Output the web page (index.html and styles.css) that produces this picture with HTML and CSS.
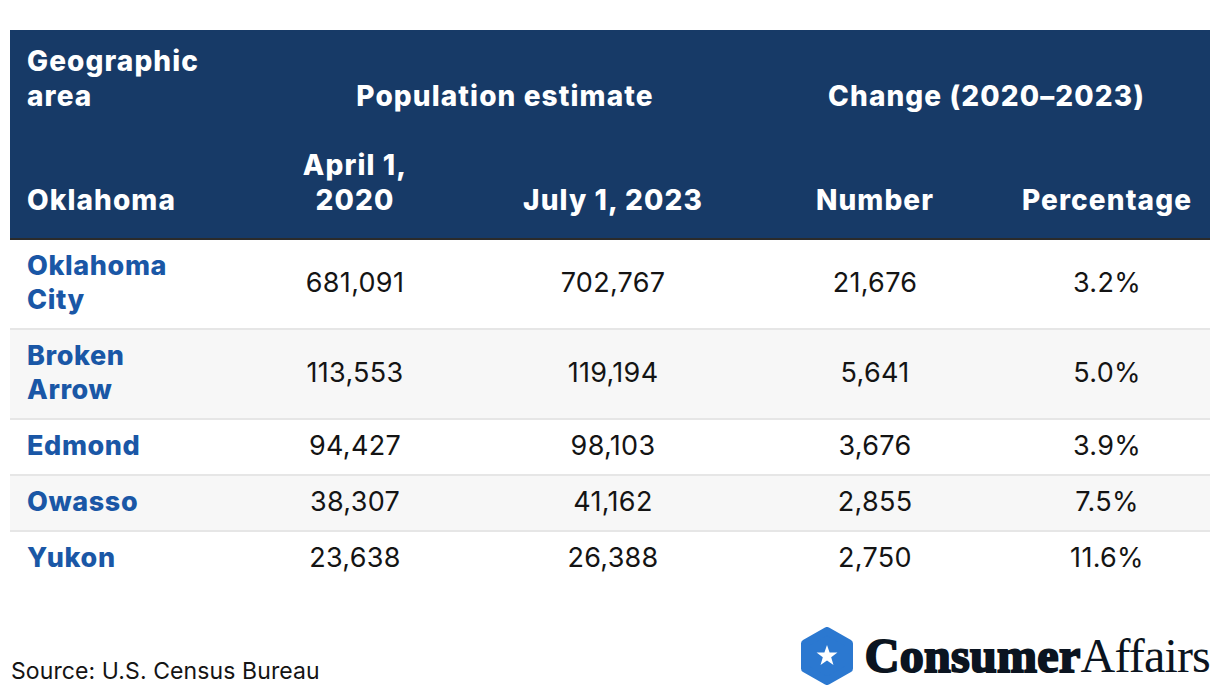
FILE: index.html
```html
<!DOCTYPE html>
<html lang="en">
<head>
<meta charset="utf-8">
<title>Oklahoma population estimates</title>
<link rel="stylesheet" href="styles.css">
</head>
<body>
<div class="page">
  <table class="pop">
    <colgroup>
      <col class="c1"><col class="c2"><col class="c3"><col class="c4"><col class="c5">
    </colgroup>
    <thead>
      <tr class="h1">
        <th class="left">Geographic<br>area</th>
        <th colspan="2">Population estimate</th>
        <th colspan="2">Change (2020–2023)</th>
      </tr>
      <tr class="h2">
        <th class="left">Oklahoma</th>
        <th>April 1,<br>2020</th>
        <th>July 1, 2023</th>
        <th>Number</th>
        <th class="pct">Percentage</th>
      </tr>
    </thead>
    <tbody>
      <tr>
        <td class="city">Oklahoma<br>City</td><td>681,091</td><td>702,767</td><td>21,676</td><td class="pct">3.2%</td>
      </tr>
      <tr class="alt">
        <td class="city">Broken<br>Arrow</td><td>113,553</td><td>119,194</td><td>5,641</td><td class="pct">5.0%</td>
      </tr>
      <tr>
        <td class="city">Edmond</td><td>94,427</td><td>98,103</td><td>3,676</td><td class="pct">3.9%</td>
      </tr>
      <tr class="alt">
        <td class="city">Owasso</td><td>38,307</td><td>41,162</td><td>2,855</td><td class="pct">7.5%</td>
      </tr>
      <tr class="last">
        <td class="city">Yukon</td><td>23,638</td><td>26,388</td><td>2,750</td><td class="pct">11.6%</td>
      </tr>
    </tbody>
  </table>
  <div class="footer">
    <div class="source">Source: U.S. Census Bureau</div>
    <div class="logo">
      <svg class="hex" width="52" height="58" viewBox="0 0 52 58" aria-hidden="true">
        <polygon points="26,4 48,16.5 48,41.5 26,54 4,41.5 4,16.5" fill="#2b78d0" stroke="#2b78d0" stroke-width="8" stroke-linejoin="round"/>
        <polygon points="26,18 28.59,25.44 36.46,25.6 30.18,30.36 32.47,37.9 26,33.4 19.53,37.9 21.82,30.36 15.54,25.6 23.41,25.44" fill="#ffffff"/>
      </svg>
      <div class="brand"><span class="b1">Consumer</span><span class="b2">Affairs</span></div>
    </div>
  </div>
</div>
</body>
</html>
```
FILE: styles.css
```css
html, body {
  margin: 0;
  padding: 0;
  background: #ffffff;
}
body {
  font-family: Inter, "Noto Sans", "Liberation Sans", sans-serif;
  color: #141414;
}
.page {
  width: 1200px;
  padding: 30px 10px 0;
}
.pop {
  width: 1200px;
  border-collapse: collapse;
  table-layout: fixed;
}
.c1 { width: 237px; }
.c2 { width: 216px; }
.c3 { width: 300px; }
.c4 { width: 224px; }
.c5 { width: 223px; }

.pop thead {
  background: #173a67;
  color: #ffffff;
}
.pop th {
  font-weight: 800;
  font-size: 28px;
  line-height: 35px;
  text-align: center;
  vertical-align: bottom;
  padding: 0 10px;
  letter-spacing: 1.1px;
  white-space: nowrap;
}
.pop th.left {
  text-align: left;
  padding-left: 17px;
}
.h1 th {
  padding-top: 14px;
  padding-bottom: 14px;
}
.h2 th {
  padding-top: 20px;
  padding-bottom: 20px;
  border-bottom: 2px solid #2b2b2b;
}
.pop td {
  font-size: 27px;
  line-height: 34px;
  text-align: center;
  vertical-align: middle;
  padding: 9px 10px 11px;
  border-bottom: 2px solid #e6e6e6;
  color: #141414;
  letter-spacing: 0.3px;
  white-space: nowrap;
}
.pop th.pct, .pop td.pct {
  padding-left: 17px;
  padding-right: 0;
}
.pop td.city {
  text-align: left;
  padding-left: 17px;
  font-weight: 800;
  color: #1a57a6;
  letter-spacing: 0.6px;
}
.pop tr.alt td {
  background: #f7f7f7;
}
.pop tr.last td {
  border-bottom: 0;
}
.footer {
  display: flex;
  justify-content: space-between;
  align-items: flex-end;
  margin-top: 41px;
}
.source {
  font-size: 23px;
  line-height: 26px;
  padding-left: 1px;
  padding-bottom: 1px;
  color: #141414;
  letter-spacing: 0.1px;
}
.logo {
  display: flex;
  align-items: center;
  gap: 12px;
}
.hex {
  display: block;
}
.brand {
  font-family: "Liberation Serif", "Times New Roman", serif;
  font-size: 48px;
  line-height: 50px;
  color: #0b1420;
  white-space: nowrap;
}
.b1 {
  font-weight: 700;
  -webkit-text-stroke: 2px #0b1420;
  letter-spacing: 0.3px;
}
.b2 {
  font-weight: 400;
  letter-spacing: -0.8px;
}
```
